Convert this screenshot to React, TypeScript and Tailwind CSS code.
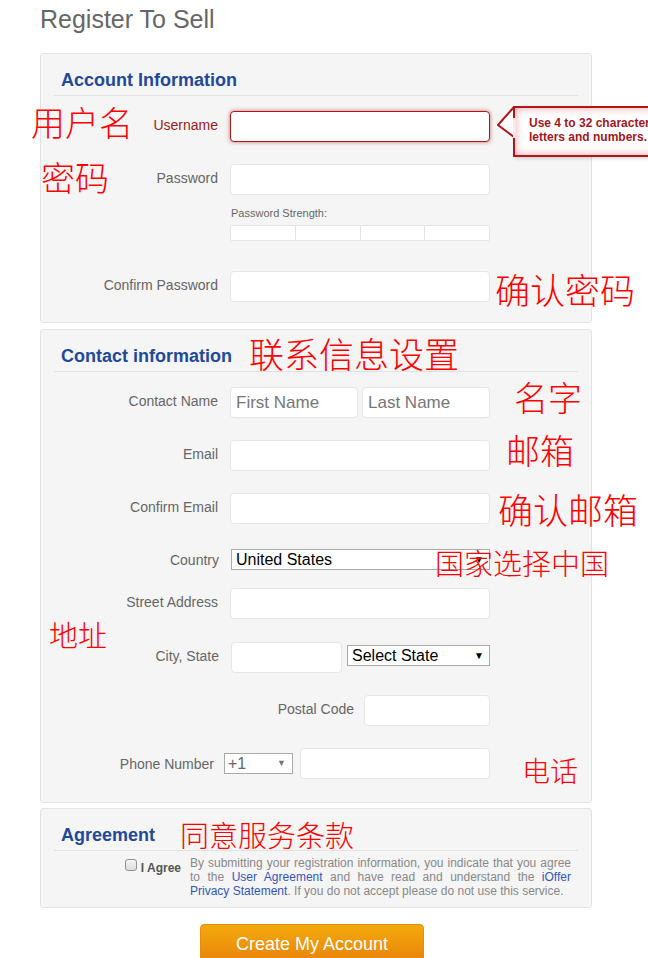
import React from "react"

const sans = { fontFamily: '"Liberation Sans", Arial, sans-serif' }

function Note({ text, className }: { text: string; className: string }) {
  return (
    <span
      className={`absolute whitespace-nowrap text-[#ff0000] leading-none pointer-events-none ${className}`}
      style={{ fontFamily: '"Noto Sans CJK SC", sans-serif', fontWeight: 300 }}
    >
      {text}
    </span>
  )
}

function Label({ children, red }: { children: React.ReactNode; red?: boolean }) {
  return (
    <div className={`mb-[3px] w-[164px] shrink-0 text-right text-[14px] leading-[16px] ${red ? "text-[#9b1b1b]" : "text-[#666]"}`}>
      {children}
    </div>
  )
}

function TextBox({ className = "", placeholder }: { className?: string; placeholder?: string }) {
  return (
    <div className={`h-[31px] rounded-[4px] border border-[#e6e6e6] bg-white flex items-center px-[5px] ${className}`}>
      {placeholder && <span className="text-[17px] text-[#777]">{placeholder}</span>}
    </div>
  )
}

function FakeSelect({ value, className = "", arrow = "text-black" }: { value: string; className?: string; arrow?: string }) {
  return (
    <div className={`h-[21px] border border-[#a9a9a9] bg-white flex items-center justify-between pl-[4px] pr-[5px] ${className}`}>
      <span className="text-[16px] leading-[18px] text-black">{value}</span>
      <span className={`text-[10px] leading-none ${arrow}`}>▼</span>
    </div>
  )
}

function Heading({ children }: { children: React.ReactNode }) {
  return (
    <div className="border-b border-[#e2e2e2] pb-[5px] pl-[7px]">
      <h2 className="text-[18px] leading-[20px] font-bold text-[#21499a]">{children}</h2>
    </div>
  )
}

function Panel({ children, className = "" }: { children: React.ReactNode; className?: string }) {
  return (
    <section className={`rounded-[3px] border border-[#e3e3e3] bg-[#f5f5f5] px-[13px] pt-[16px] ${className}`}>
      {children}
    </section>
  )
}

export default function App() {
  return (
    <div className="relative w-[648px] h-[958px] overflow-hidden bg-white" style={sans}>
      <div className="ml-[40px] w-[552px]">
        <h1 className="pt-[5px] text-[25px] leading-[28px] text-[#666]">Register To Sell</h1>

        {/* account */}
        <Panel className="mt-[20px] pb-[20px]">
          <Heading>Account Information</Heading>
          <div className="relative mt-[15px] flex items-center">
            <Label red>Username</Label>
            <div className="ml-[12px] h-[31px] w-[260px] rounded-[4px] border border-[#a8191c] bg-white shadow-[0_0_4px_rgba(170,20,20,0.6)]" />
            <div className="absolute left-[459px] top-[-5px] h-[51px] w-[160px]">
              <svg className="absolute left-[-16px] top-0" width="20" height="34" viewBox="0 0 20 34">
                <polygon points="17,1 1,19 17,31" fill="#fff" stroke="#b0161c" strokeWidth="2" />
              </svg>
              <div className="h-full w-full border-2 border-[#b0161c] bg-white shadow-[inset_0_0_9px_rgba(215,40,50,0.45),2px_2px_3px_rgba(0,0,0,0.15)] pl-[14px] pt-[8px] text-[12px] leading-[14px] font-bold text-[#a3161c]">
                Use 4 to 32 characters,
                <br />
                letters and numbers.
              </div>
              <div className="absolute left-[0px] top-[12px] h-[20px] w-[3px] bg-white shadow-[inset_0_0_3px_rgba(215,40,50,0.3)]" />
            </div>
          </div>
          <div className="mt-[22px] flex items-center">
            <Label>Password</Label>
            <TextBox className="ml-[12px] w-[260px]" />
          </div>
          <div className="ml-[176px] mt-[12px] w-[260px]">
            <div className="pl-[1px] text-[11px] leading-[13px] text-[#666]">Password Strength:</div>
            <div className="mt-[5px] flex h-[16px] rounded-[2px] border border-[#e3e3e3] bg-white">
              <div className="flex-1 border-r border-[#e3e3e3]" />
              <div className="flex-1 border-r border-[#e3e3e3]" />
              <div className="flex-1 border-r border-[#e3e3e3]" />
              <div className="flex-1" />
            </div>
          </div>
          <div className="mt-[30px] flex items-center">
            <Label>Confirm Password</Label>
            <TextBox className="ml-[12px] w-[260px]" />
          </div>
        </Panel>

        {/* contact */}
        <Panel className="mt-[6px] pb-[23px]">
          <Heading>Contact information</Heading>
          <div className="mt-[15px] flex items-center">
            <Label>Contact Name</Label>
            <TextBox className="ml-[12px] w-[128px]" placeholder="First Name" />
            <TextBox className="ml-[4px] w-[128px]" placeholder="Last Name" />
          </div>
          <div className="mt-[22px] flex items-center">
            <Label>Email</Label>
            <TextBox className="ml-[12px] w-[260px]" />
          </div>
          <div className="mt-[22px] flex items-center">
            <Label>Confirm Email</Label>
            <TextBox className="ml-[12px] w-[260px]" />
          </div>
          <div className="mt-[25px] flex h-[21px] items-center">
            <div className="w-[165px] shrink-0 text-right text-[14px] leading-[16px] text-[#666]">Country</div>
            <FakeSelect value="United States" className="ml-[12px] w-[259px]" />
          </div>
          <div className="mt-[18px] flex items-center">
            <Label>Street Address</Label>
            <TextBox className="ml-[12px] w-[260px]" />
          </div>
          <div className="mt-[23px] flex items-center">
            <div className="mb-[3px] w-[165px] shrink-0 text-right text-[14px] leading-[16px] text-[#666]">City, State</div>
            <TextBox className="ml-[12px] w-[111px]" />
            <FakeSelect value="Select State" className="ml-[5px] w-[143px] mt-[-4px]" />
          </div>
          <div className="mt-[22px] flex items-center">
            <div className="ml-[176px] flex w-[260px] items-center justify-end">
              <span className="mb-[3px] text-[14px] leading-[16px] text-[#666]">Postal Code</span>
              <TextBox className="ml-[10px] w-[126px]" />
            </div>
          </div>
          <div className="mt-[22px] flex items-center">
            <div className="w-[160px] shrink-0 text-right text-[14px] leading-[16px] text-[#666]">Phone Number</div>
            <div className="ml-[10px] flex h-[21px] w-[69px] items-center justify-between border border-[#a9a9a9] bg-white pl-[3px] pr-[6px]">
              <span className="text-[16px] leading-[18px] text-[#666]">+1</span>
              <span className="text-[9px] leading-none text-[#777]">▼</span>
            </div>
            <TextBox className="ml-[7px] w-[190px]" />
          </div>
        </Panel>

        {/* agreement */}
        <Panel className="mt-[5px] pb-[9px]">
          <Heading>Agreement</Heading>
          <div className="mt-[5px] flex">
            <div className="flex w-[136px] shrink-0 justify-end pr-[9px] pt-[2px]">
              <span className="mt-[1px] h-[12px] w-[12px] rounded-[3px] border border-[#8f8f8f] bg-gradient-to-b from-[#f4f4f4] to-[#dedede]" />
              <span className="ml-[4px] mt-[3px] text-[12px] leading-[14px] font-bold text-[#555]">I Agree</span>
            </div>
            <div className="w-[381px] text-[12px] leading-[14px] text-[#888]">
              <div className="whitespace-nowrap [text-align-last:justify] text-justify">
                By submitting your registration information, you indicate that you agree
              </div>
              <div className="whitespace-nowrap [text-align-last:justify] text-justify">
                to the <span className="text-[#3355bb]">User Agreement</span> and have read and understand the{" "}
                <span className="text-[#3355bb]">iOffer</span>
              </div>
              <div className="whitespace-nowrap">
                <span className="text-[#3355bb]">Privacy Statement</span>. If you do not accept please do not use this service.
              </div>
            </div>
          </div>
        </Panel>

        <button className="ml-[160px] mt-[16px] h-[40px] w-[224px] rounded-[4px] border border-[#e0900a] bg-gradient-to-b from-[#f3aa0c] to-[#e8820a] text-[18px] text-white">
          Create My Account
        </button>
      </div>

      <Note text="用户名" className="left-[31px] top-[105px] text-[34px]" />
      <Note text="密码" className="left-[41px] top-[160px] text-[34px]" />
      <Note text="确认密码" className="left-[495px] top-[271px] text-[35px]" />
      <Note text="联系信息设置" className="left-[249px] top-[335px] text-[35px]" />
      <Note text="名字" className="left-[514px] top-[380px] text-[34px]" />
      <Note text="邮箱" className="left-[506px] top-[433px] text-[34px]" />
      <Note text="确认邮箱" className="left-[498px] top-[491px] text-[35px]" />
      <Note text="国家选择中国" className="left-[435px] top-[548px] text-[29px]" />
      <Note text="地址" className="left-[49px] top-[620px] text-[29px]" />
      <Note text="电话" className="left-[522px] top-[756px] text-[28px]" />
      <Note text="同意服务条款" className="left-[180px] top-[820px] text-[29px]" />
    </div>
  )
}
